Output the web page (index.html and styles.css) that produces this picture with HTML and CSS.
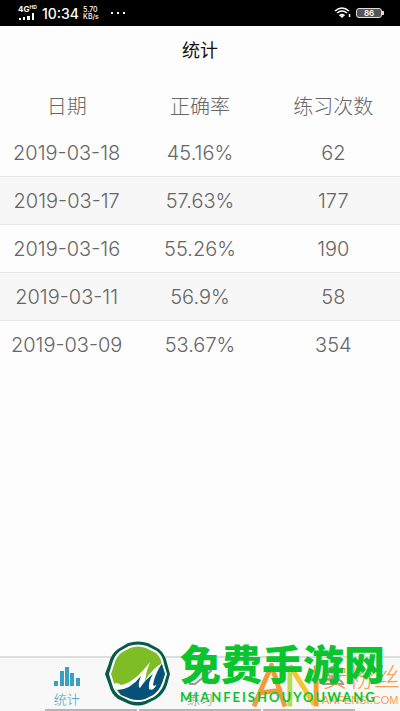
FILE: index.html
```html
<!DOCTYPE html>
<html lang="zh-CN">
<head>
	<meta charset="UTF-8">
	<meta name="viewport" content="width=device-width, initial-scale=1">
	<title>统计</title>
	<link rel="stylesheet" href="styles.css">
</head>
<body>
	<div class="status">
		<div class="signal">
			<span class="net">4G<sup>HD</sup></span>
			<svg width="18" height="8" viewBox="0 0 18 8" fill="#fff"><path d="M1 5h2v2H1zM5 4h2v3H5zM9 3h3v4H9zM14 0h2v7h-2z"/></svg>
		</div>
		<span class="time">10:34</span>
		<div class="speed"><span>5.70</span><span>KB/s</span></div>
		<span class="dots"><i></i><i></i><i></i></span>
		<svg class="wifi" width="18" height="12" viewBox="0 0 18 12" fill="none" stroke="#fff" stroke-width="1.5"><path d="M1 4Q8 -2 15 4M3 6Q8 2 13 6M5.500 8.500Q8 6.500 10.500 8.500"/><path d="M7 9h2l-1 1zM15.500 7v3"/></svg>
		<span class="battery">86</span>
	</div>
	<header class="title"><h1>统计</h1></header>
	<main>
		<table class="list">
			<thead>
				<tr><th>日期</th><th>正确率</th><th>练习次数</th></tr>
			</thead>
			<tbody>
				<tr><td>2019-03-18</td><td>45.16%</td><td>62</td></tr>
				<tr><td>2019-03-17</td><td>57.63%</td><td>177</td></tr>
				<tr><td>2019-03-16</td><td>55.26%</td><td>190</td></tr>
				<tr><td>2019-03-11</td><td>56.9%</td><td>58</td></tr>
				<tr><td>2019-03-09</td><td>53.67%</td><td>354</td></tr>
			</tbody>
		</table>
	</main>
	<nav class="tabs">
		<a class="cur" href="#stat">
			<svg width="28" height="20" viewBox="0 0 28 20" fill="#3a9fc0"><path d="M1 15h4v5H1zM7 5h4v15H7zM12 1h4v19h-4zM17 7h4v13h-4zM23 12h4v8h-4z"/></svg>
			<span>统计</span>
		</a>
		<a href="#practice">
			<svg width="28" height="20" viewBox="0 0 28 20" fill="none" stroke="#999" stroke-width="2"><path d="M4 15L20 1l5 4L9 18H4z"/></svg>
			<span>练习</span>
		</a>
		<a href="#mine" aria-label="我的">
			<svg width="28" height="20" viewBox="0 0 28 20" fill="none" stroke="#999" stroke-width="2"><circle cx="14" cy="6" r="5"/><path d="M4 18q3-6 10-6t10 6z"/></svg>
		</a>
	</nav>
	<div class="lines"><i></i><i class="mid"></i><i></i></div>

	<!-- 右下角水印 -->
	<div class="mark fans">
		<svg width="68" height="46" viewBox="0 0 70 46" fill="none" stroke-width="5"><path d="M2 44L20 2L34 44M9 30L31 27" stroke="#f29a38"/><path d="M39 44V2" stroke="#b9dc55"/><path d="M39 2L64 42" stroke="#f5c52f"/><path d="M66 44V2" stroke="#f29a38"/></svg>
		<div><b>安粉丝</b><span>ANFENSI.COM</span></div>
	</div>
	<div class="mark game">
		<svg width="68" height="66" viewBox="0 0 68 66">
			<path d="M24 2Q34-1 44 2L55 8Q61 13 63 22L66 33L63 44Q60 53 52 58L42 63Q34 66 25 63L14 58Q7 53 5 44L1 33L5 22Q7 13 14 8Z" fill="#075c49"/>
			<path d="M25 5Q34 2 43 5L53 10Q59 15 60 23L63 33L60 43Q57 51 50 56L41 60Q34 62 26 60L16 55Q10 51 8 43L5 33L8 23Q10 15 16 10Z" fill="#fff"/>
			<path d="M26 7Q34 4 42 7L52 12Q57 16 58 24L61 33L58 42Q55 50 49 54L41 58Q34 60 27 58L17 54Q11 49 10 42L7 33L10 24Q12 16 17 12Z" fill="#7fbd26"/>
			<path d="M12 47Q29 47 39 31L38 42L58 23L61 33L58 42Q55 50 49 54L41 58Q34 60 27 58L17 54Z" fill="#07527a"/>
			<path d="M9 44Q12 40 17 44Q30 42 46 21Q42 30 41 40Q47 29 58 22Q50 35 49 44Q51 46 53 43Q49 51 45 48Q44 41 49 33Q41 39 36 47Q33 45 37 35Q26 49 13 49Z" fill="#fff"/>
		</svg>
		<div><b>免费手游网</b><span>MIANFEISHOUYOUWANG</span></div>
	</div>
</body>
</html>
```
FILE: styles.css
```css
*{
	margin: 0;
	padding: 0;
	box-sizing: border-box;
}
body{
	display: flex;
	flex-direction: column;
	min-height: 100vh;
	position: relative;
	overflow-x: hidden;
	background-color: #fdfdfd;
	color: #666;
	font-family: Inter, "Noto Sans CJK SC", sans-serif;
	font-weight: 300;
}
svg{
	display: block;
}
.status{
	display: flex;
	align-items: center;
	height: 26px;
	padding: 0 18px;
	background-color: #000;
	color: #fff;
}
.signal{
	width: 20px;
	margin-right: 4px;
}
.net{
	display: flex;
	font-size: 8px;
	line-height: 8px;
	font-weight: 700;
}
.net sup{
	font-size: 5px;
	line-height: 5px;
}
.time{
	margin-right: 4px;
	font-size: 14px;
	font-weight: 500;
}
.speed{
	display: flex;
	flex-direction: column;
	font-size: 7px;
	line-height: 7px;
	font-weight: 500;
}
.dots{
	display: flex;
	gap: 4px;
	margin-left: 12px;
}
.dots i{
	width: 2px;
	height: 2px;
	background-color: #fff;
}
.wifi{
	margin-left: auto;
	margin-right: 4px;
}
.battery{
	position: relative;
	width: 26px;
	height: 10px;
	border: 1px solid #ddd;
	border-radius: 3px;
	background-color: #555;
	font-size: 8px;
	line-height: 8px;
	font-weight: 600;
	text-align: center;
}
.battery::after{
	content: "";
	position: absolute;
	top: 2px;
	right: -3px;
	width: 2px;
	height: 4px;
	background-color: #ddd;
}
.title{
	height: 54px;
	padding-top: 13px;
	text-align: center;
	color: #111;
}
.title h1{
	font-size: 18px;
	line-height: 24px;
	font-weight: 400;
}
main{
	flex: 1;
}
.list{
	width: 100%;
	table-layout: fixed;
	border-collapse: collapse;
	text-align: center;
}
.list th,
.list td{
	height: 48px;
	padding-top: 2px;
	font-size: 20px;
	font-weight: 300;
}
.list tbody tr:nth-child(even){
	background-color: #f7f7f7;
}
.list tbody tr:nth-child(even) td{
	border-top: 1px solid #e6e6e6;
	border-bottom: 1px solid #e6e6e6;
}
.tabs{
	display: flex;
	height: 53px;
	border-top: 2px solid #ddd;
	background-color: #f8f8f8;
}
.tabs a{
	display: flex;
	flex: 1;
	flex-direction: column;
	align-items: center;
	gap: 4px;
	padding-top: 8px;
	color: #888;
	font-size: 13px;
	line-height: 18px;
	text-decoration: none;
}
.tabs .cur{
	color: #3a9fc0;
}
.lines{
	display: flex;
	gap: 2px;
	height: 2px;
	padding: 0 45px;
	background-color: #f8f8f8;
}
.lines i{
	flex: 3;
	background-color: #b5b5b5;
}
.lines .mid{
	flex: 4;
}
.mark{
	display: flex;
	position: absolute;
	pointer-events: none;
	white-space: nowrap;
}
.mark b,
.mark span{
	display: block;
}
.fans{
	right: 0;
	bottom: 2px;
	gap: 2px;
	color: #f2a04c;
}
.fans b{
	font-size: 26px;
	line-height: 30px;
	font-weight: 300;
}
.fans span{
	font-family: "Liberation Sans", sans-serif;
	font-size: 11px;
	line-height: 14px;
}
.game{
	left: 104px;
	bottom: 4px;
	gap: 8px;
	color: #0bc52f;
}
.game b{
	font-size: 41px;
	line-height: 48px;
	font-weight: 900;
}
.game span{
	font-family: Lato, sans-serif;
	font-size: 13px;
	line-height: 16px;
	font-weight: 700;
	letter-spacing: 2px;
}
```
